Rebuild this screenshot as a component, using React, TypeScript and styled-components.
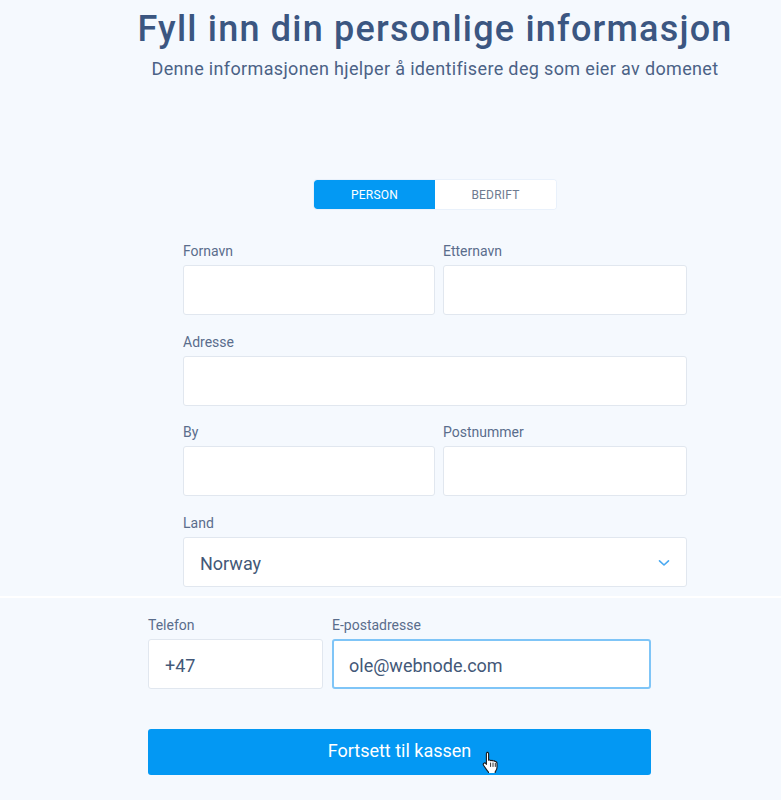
import React from "react";
import styled, { createGlobalStyle } from "styled-components";

const Global = createGlobalStyle`
  html, body { margin: 0; padding: 0; background: #f5f9fe; }
  body { font-family: Roboto, "Noto Sans", Arial, sans-serif; overflow: hidden; }
  * { box-sizing: border-box; }
`;

const Page = styled.div`
  width: 781px;
  height: 800px;
  background: #f5f9fe;
  display: flex;
  flex-direction: column;
`;

const TopSection = styled.section`
  width: 700px;
  margin-left: 85px;
  padding-top: 9px;
  display: flex;
  flex-direction: column;
  align-items: center;
`;

const Title = styled.h1`
  margin: 0;
  font-size: 36px;
  line-height: 40px;
  font-weight: 500;
  color: #3b5681;
  white-space: nowrap;
  letter-spacing: 1.2px;
`;

const Subtitle = styled.p`
  margin: 9px 0 0;
  font-size: 18px;
  line-height: 22px;
  font-weight: 400;
  color: #4b6286;
  white-space: nowrap;
  letter-spacing: 0.35px;
`;

const Toggle = styled.div`
  margin-top: 100px;
  display: flex;
  width: 242px;
  height: 29px;
  border-radius: 3px;
  background: #ffffff;
  box-shadow: 0 0 0 1px #e9f1fb;
  overflow: hidden;
`;

const ToggleButton = styled.button<{ $active?: boolean }>`
  flex: 1;
  border: none;
  margin: 0;
  padding: 0;
  font-family: Roboto, Arial, sans-serif;
  font-size: 12px;
  letter-spacing: 0.2px;
  text-transform: uppercase;
  background: ${(p) => (p.$active ? "#0399f3" : "#ffffff")};
  color: ${(p) => (p.$active ? "#ffffff" : "#6e7b90")};
  border-radius: ${(p) => (p.$active ? "3px 0 0 3px" : "0")};
`;

const Form = styled.div<{ $cols: string; $gap: number }>`
  display: grid;
  grid-template-columns: ${(p) => p.$cols};
  column-gap: ${(p) => p.$gap}px;
  row-gap: 15.67px;
`;

const TopForm = styled(Form)`
  width: 504px;
  margin-top: 31px;
`;

const Field = styled.div<{ $span?: boolean }>`
  display: flex;
  flex-direction: column;
  grid-column: ${(p) => (p.$span ? "1 / -1" : "auto")};
`;

const Label = styled.label`
  font-size: 14px;
  line-height: 20px;
  padding-top: 1px;
  color: #5a6d8c;
  margin-bottom: 4px;
`;

const Input = styled.div<{ $focus?: boolean }>`
  position: relative;
  height: 50px;
  background: #ffffff;
  border: ${(p) => (p.$focus ? "2px solid #7fc5f7" : "1px solid #e1e7ef")};
  border-radius: 3px;
  display: flex;
  align-items: center;
  padding-top: 3px;
  padding-left: ${(p) => (p.$focus ? "15px" : "16px")};
  font-size: 18px;
  color: #435878;
`;

const Chevron = styled.svg`
  position: absolute;
  right: 16px;
  top: 21px;
`;

const Divider = styled.div`
  margin-top: 9px;
  height: 2px;
  background: #ffffff;
`;

const BottomSection = styled.section`
  width: 503px;
  margin-left: 148px;
  padding-top: 16px;
  display: flex;
  flex-direction: column;
`;

const Submit = styled.button`
  position: relative;
  margin-top: 40px;
  height: 46px;
  width: 100%;
  border: none;
  border-radius: 3px;
  background: #0398f3;
  color: #ffffff;
  font-family: Roboto, Arial, sans-serif;
  font-size: 18px;
  padding: 0 0 2px;
`;

const Cursor = styled.svg`
  position: absolute;
  left: 334px;
  top: 22px;
`;

export default function App() {
  return (
    <Page>
      <Global />
      <TopSection>
        <Title>Fyll inn din personlige informasjon</Title>
        <Subtitle>Denne informasjonen hjelper å identifisere deg som eier av domenet</Subtitle>
        <Toggle>
          <ToggleButton $active>Person</ToggleButton>
          <ToggleButton>Bedrift</ToggleButton>
        </Toggle>
        <TopForm $cols="252px 244px" $gap={8}>
          <Field>
            <Label>Fornavn</Label>
            <Input />
          </Field>
          <Field>
            <Label>Etternavn</Label>
            <Input />
          </Field>
          <Field $span>
            <Label>Adresse</Label>
            <Input />
          </Field>
          <Field>
            <Label>By</Label>
            <Input />
          </Field>
          <Field>
            <Label>Postnummer</Label>
            <Input />
          </Field>
          <Field $span>
            <Label>Land</Label>
            <Input>
              Norway
              <Chevron width="12" height="8" viewBox="0 0 12 8">
                <path d="M1.5 1.8 L6 6 L10.5 1.8" fill="none" stroke="#4aa9f1" strokeWidth="1.6" strokeLinecap="round" strokeLinejoin="round" />
              </Chevron>
            </Input>
          </Field>
        </TopForm>
      </TopSection>
      <Divider />
      <BottomSection>
        <Form $cols="175px 319px" $gap={9}>
          <Field>
            <Label>Telefon</Label>
            <Input>+47</Input>
          </Field>
          <Field>
            <Label>E-postadresse</Label>
            <Input $focus>ole@webnode.com</Input>
          </Field>
        </Form>
        <Submit>
          Fortsett til kassen
          <Cursor width="18" height="22" viewBox="0 0 18 22">
            <path
              d="M5 1.2c.9 0 1.6.7 1.6 1.6v6.4l.2-.1c.8-.3 1.6 0 2 .6.7-.5 1.7-.4 2.2.3.7-.4 1.7-.2 2.1.6.4-.1 1 0 1.4.4.4.4.5 1 .5 1.6v3.6c0 1.4-.4 2.6-1.2 3.7l-.6.9v2H6.5v-1.7c-.6-.6-1.3-1.4-2-2.5l-3-4.4c-.5-.7-.3-1.6.4-2 .6-.4 1.4-.3 1.9.3l.6.8V2.8c0-.9.7-1.6 1.6-1.6z"
              fill="#ffffff"
              stroke="#1a1a1a"
              strokeWidth="1.1"
              strokeLinejoin="round"
            />
            <path d="M8.6 12v3.5M11 12v3.5M13.3 12.4v3.1" stroke="#1a1a1a" strokeWidth="0.9" strokeLinecap="round" />
          </Cursor>
        </Submit>
      </BottomSection>
    </Page>
  );
}
